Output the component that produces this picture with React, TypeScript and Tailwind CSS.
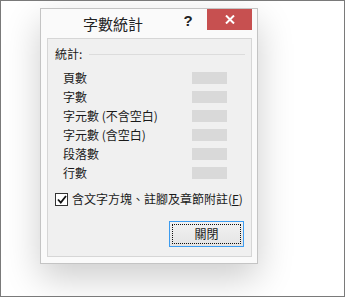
import React from 'react';

const rows = ['頁數', '字數', '字元數 (不含空白)', '字元數 (含空白)', '段落數', '行數'];

export default function App() {
  return (
    <div
      className="w-[345px] h-[297px] border border-[#7a7a7a] bg-white overflow-hidden text-[12px] text-[#1a1a1a]"
      style={{ fontFamily: '"Noto Sans CJK TC", "Noto Sans", sans-serif' }}
    >
      {/* dialog */}
      <div className="ml-[39px] mt-[7px] w-[218px] h-[256px] border border-[#c4c4c4] bg-[#fafafa] shadow-[0_14px_34px_rgba(0,0,0,0.2)] flex flex-col">
        {/* title bar */}
        <div className="h-[29px] flex items-start">
          <div className="ml-[42px] mt-[5px] text-[15px] leading-[20px] text-[#222]">字數統計</div>
          <div className="flex-1" />
          <div className="w-[20px] mt-[2px] text-center text-[15px] leading-[20px] font-bold text-[#222]" style={{ fontFamily: '"Liberation Sans", sans-serif' }}>
            ?
          </div>
          <div className="ml-[9px] mr-[5px] w-[45px] h-[21px] bg-[#c75050] flex items-center justify-center">
            <svg width="10" height="9" viewBox="0 0 10 9">
              <path d="M1 0.5 L9 8.5 M9 0.5 L1 8.5" stroke="#fff" strokeWidth="2" />
            </svg>
          </div>
        </div>

        {/* panel */}
        <div className="ml-[6px] w-[205px] h-[219px] border border-[#d6d6d6] bg-[#f0f0f0] flex flex-col">
          <div className="mt-[7px] h-[16px] pl-[7px] pr-[6px] flex items-center">
            <span className="leading-[16px]">統計:</span>
            <div className="flex-1 ml-[7px] h-px bg-[#dcdcdc]" />
          </div>

          <div className="mt-[6px] flex flex-col">
            {rows.map((r) => (
              <div key={r} className="h-[19px] flex items-center pl-[15px]">
                <span className="w-[129px] leading-[16px] whitespace-nowrap">{r}</span>
                <div className="w-[35px] h-[12px] bg-[#d9d9d9]" />
              </div>
            ))}
          </div>

          <div className="mt-[9px] h-[16px] pl-[7px] flex items-center">
            <div className="w-[13px] h-[13px] border border-[#333] bg-white flex items-center justify-center">
              <svg width="10" height="9" viewBox="0 0 10 9">
                <path d="M1 4.5 L3.8 7.5 L9 1" stroke="#111" strokeWidth="1.8" fill="none" />
              </svg>
            </div>
            <span className="ml-[4px] leading-[16px] whitespace-nowrap">
              含文字方塊、註腳及章節附註(<span className="underline">F</span>)
            </span>
          </div>

          <div className="mt-[14px] mr-[7px] flex justify-end">
            <div className="w-[75px] h-[26px] border border-[#3c9cf0] bg-gradient-to-b from-[#f2f2f2] to-[#e4e4e4] p-[2px]">
              <div className="w-full h-full border border-dotted border-[#111] flex items-center justify-center leading-[16px]">
                關閉
              </div>
            </div>
          </div>
        </div>
      </div>
    </div>
  );
}
